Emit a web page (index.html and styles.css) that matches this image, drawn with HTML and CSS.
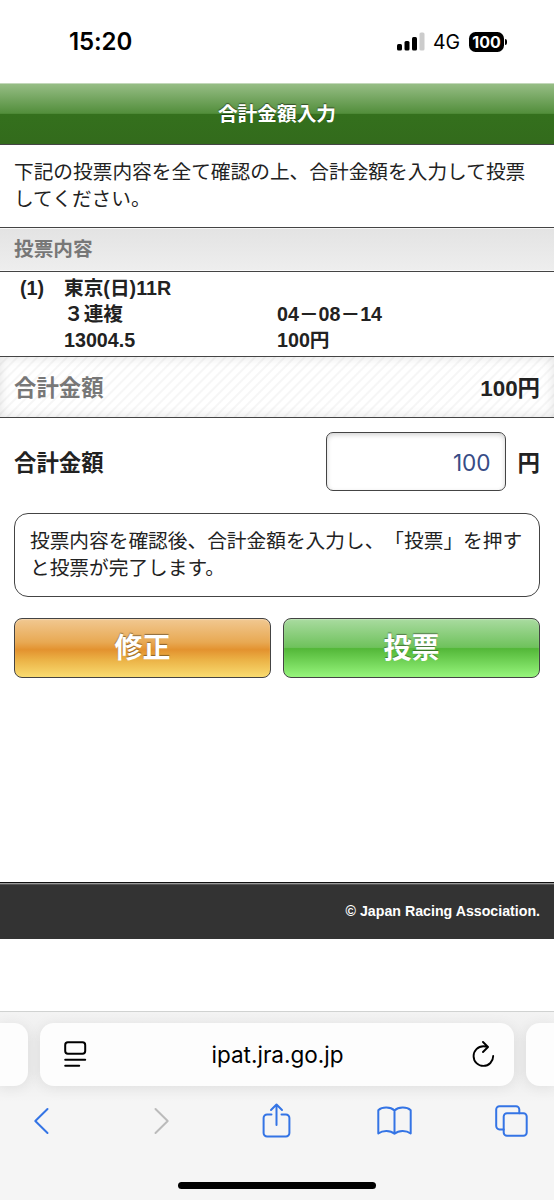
FILE: index.html
```
<!DOCTYPE html>
<html lang="ja">
<head>
  <meta charset="UTF-8">
  <meta name="viewport" content="width=device-width, initial-scale=1.0">
  <title>合計金額入力</title>
  <link rel="stylesheet" href="styles.css">
</head>
<body>
  <div class="status">
    <div class="time">15:20</div>
    <svg class="signal" width="28" height="19" viewBox="0 0 28 19">
      <rect x="0" y="12" width="5" height="6.5" rx="1.5"/>
      <rect x="7.5" y="9" width="5" height="9.5" rx="1.5"/>
      <rect x="15" y="5" width="5" height="13.5" rx="1.5"/>
      <rect x="22.5" y="0.5" width="5" height="18" rx="1.5" fill="#ccc"/>
    </svg>
    <div class="network">4G</div>
    <div class="battery">100</div>
    <div class="battery-tip"></div>
  </div>

  <header>合計金額入力</header>

  <main>
    <p class="intro">下記の投票内容を全て確認の上、合計金額を入力して投票<br>してください。</p>

    <h2>投票内容</h2>
    <div class="bet">
      <span class="number">(1)</span><span>東京(日)11R</span><span></span>
      <span></span><span>３連複</span><span>04－08－14</span>
      <span></span><span>13004.5</span><span>100円</span>
    </div>

    <div class="total">
      <span class="total-label">合計金額</span>
      <span>100円</span>
    </div>

    <form onsubmit="return false">
      <div class="amount">
        <label for="amount">合計金額</label>
        <input id="amount" type="text" inputmode="numeric" value="100">
        <span class="yen">円</span>
      </div>
      <p class="message">投票内容を確認後、合計金額を入力し、「投票」を押す<br>と投票が完了します。</p>
      <div class="buttons">
        <button class="orange" type="button">修正</button>
        <button class="green" type="submit">投票</button>
      </div>
    </form>
  </main>

  <footer>© Japan Racing Association.</footer>

  <div class="browser">
    <div class="tabs">
      <div class="side-tab"></div>
      <div class="address">
        <svg width="23" height="27" viewBox="0 0 23 27" fill="none" stroke="#000" stroke-width="2" stroke-linecap="round">
          <rect x="1.2" y="1.2" width="20" height="11.6" rx="2.7"/>
          <path d="M1.2 18.7h20M1.2 24.8h14"/>
        </svg>
        <span class="url">ipat.jra.go.jp</span>
        <svg width="23" height="27" viewBox="0 0 23 27" fill="none" stroke="#000" stroke-width="1.9" stroke-linecap="round" stroke-linejoin="round">
          <path d="M21.2 15A9.8 9.8 0 1 1 11.4 5.3c1.5 0 2.9.2 4.1.6M11 1l5 5-5 5"/>
        </svg>
      </div>
      <div class="side-tab"></div>
    </div>
    <div class="toolbar">
      <svg viewBox="0 0 16 28" height="28"><path d="M14 2L1.8 14 14 26"/></svg>
      <svg class="disabled" viewBox="-2 0 16 28" height="28"><path d="M2 2l12.2 12L2 26"/></svg>
      <svg viewBox="0 0 28 36" height="36"><path d="M9 11.5H4.6a3.5 3.5 0 0 0-3.5 3.5v15a3.5 3.5 0 0 0 3.5 3.5h18.8a3.5 3.5 0 0 0 3.5-3.5V15a3.5 3.5 0 0 0-3.5-3.5H19M14 22V1.5M8.5 7L14 1.5 19.5 7"/></svg>
      <svg viewBox="0 0 35 30" height="30"><path d="M17.5 4.5v23.3M17.5 4.5C13.5.8 5.5.5 1.3 4.2v23.3c4.5-3.3 12-3.3 16.2.3 4.2-3.6 11.7-3.6 16.2-.3V4.2C29.5.5 21.5.8 17.5 4.5z"/></svg>
      <svg viewBox="0 0 33 32" height="32"><path d="M8.7 24.4H4.5A3.3 3.3 0 0 1 1.2 21V4.5a3.3 3.3 0 0 1 3.3-3.3H21a3.3 3.3 0 0 1 3.3 3.3v3.8"/><rect x="8.7" y="8.3" width="23" height="22.5" rx="3.3"/></svg>
    </div>
    <div class="home-bar"></div>
  </div>
</body>
</html>
```
FILE: styles.css
```
* {
  box-sizing: border-box;
}
html, body {
  margin: 0;
  padding: 0;
}
body {
  display: flex;
  flex-direction: column;
  height: 1200px;
  font-family: "Liberation Sans", "Noto Sans CJK JP", sans-serif;
  font-size: 19.69px;
  line-height: 27px;
  color: #222;
  background: #fff;
  text-spacing-trim: space-all;
  overflow: hidden;
}
.status {
  display: flex;
  align-items: center;
  flex: none;
  height: 83px;
  padding-left: 69px;
  font-family: Inter, sans-serif;
  line-height: 28px;
  color: #000;
}
.time {
  width: 328px;
  padding-top: 1px;
  font-size: 24px;
  font-weight: 600;
  letter-spacing: -0.1px;
}
.network {
  width: 36px;
  margin-left: 8px;
  padding-top: 1px;
  font-size: 19.5px;
}
.battery {
  width: 35px;
  height: 20px;
  border-radius: 6.5px;
  background: #000;
  color: #fff;
  font-size: 16px;
  font-weight: 700;
  line-height: 20px;
  text-align: center;
}
.battery-tip {
  width: 2px;
  height: 6px;
  margin-left: 1px;
  border-radius: 0 2px 2px 0;
  background: #000;
}
header {
  flex: none;
  height: 62px;
  border-top: 1px solid #c3d8ba;
  border-bottom: 1px solid #444;
  background: linear-gradient(#96bd85, #528e3b 49%, #34701d 50%, #336b1c);
  color: #fff;
  font-weight: bold;
  line-height: 60px;
  text-align: center;
  text-shadow: 0 -1px 1px rgba(0, 0, 0, 0.5);
}
main {
  flex: none;
  height: 737px;
}
.intro {
  height: 82px;
  margin: 0;
  padding: 14px 14px 0;
  white-space: nowrap;
}
h2 {
  height: 45px;
  margin: 0;
  padding-left: 14px;
  border-top: 1px solid #444;
  border-bottom: 1px solid #444;
  background: linear-gradient(#e3e3e3, #eee);
  box-shadow: inset 0 1px 0 #f6f6f6, inset 0 -1px 0 #fafafa;
  color: #777;
  font-size: 19.69px;
  line-height: 43px;
}
.bet {
  display: grid;
  grid-template-columns: 44px 213px 1fr;
  grid-auto-rows: 26px;
  height: 84px;
  padding: 3px 20px 0;
  font-weight: bold;
  line-height: 26px;
}
.total {
  display: flex;
  justify-content: space-between;
  height: 62px;
  padding: 0 14px;
  border-top: 1px solid #444;
  border-bottom: 1px solid #444;
  background: repeating-linear-gradient(135deg, #fff 0 4px, #f6f6f6 5px 6px, #fff 7px);
  box-shadow: inset 0 0 12px rgba(0, 0, 0, 0.12);
  font-size: 22.4px;
  font-weight: bold;
  line-height: 63px;
}
.total-label {
  color: #777;
}
form {
  padding: 14px 14px 0;
}
.amount {
  display: flex;
  align-items: center;
  font-size: 22.4px;
  font-weight: bold;
}
.amount label {
  flex: 1;
  padding-top: 3px;
}
.amount input {
  width: 180px;
  height: 59px;
  padding: 1px 14px 0;
  border: 1px solid #444;
  border-radius: 7px;
  box-shadow: inset 0 2px 5px rgba(0, 0, 0, 0.18);
  color: #374c86;
  font-family: Inter, sans-serif;
  font-size: 22.6px;
  text-align: right;
}
.yen {
  margin-left: 12px;
  padding-top: 3px;
}
.message {
  height: 84px;
  margin: 22px 0 21px;
  padding: 14px 15px;
  border: 1px solid #444;
  border-radius: 14px;
  white-space: nowrap;
}
.buttons {
  display: flex;
  gap: 12px;
}
.buttons button {
  flex: 1;
  height: 60px;
  padding: 0 0 5px;
  border: 1px solid #444;
  border-radius: 8px;
  color: #fff;
  font-family: inherit;
  font-size: 28px;
  font-weight: bold;
  text-shadow: 0 -1px 1px rgba(0, 0, 0, 0.4);
}
.buttons .orange {
  background: linear-gradient(#f1c891, #e8a953 40%, #e3922f 53%, #ebb145 70%, #f9dc71);
  box-shadow: inset 0 1px 1px #f4d5ad;
}
.buttons .green {
  background: linear-gradient(#a9dba0, #6fc25c 49%, #53b738 51%, #96f57c);
  box-shadow: inset 0 1px 1px #bce3b4;
}
footer {
  flex: none;
  height: 57px;
  padding-right: 14px;
  border-top: 1px solid #111;
  background: linear-gradient(#999 0 1px, #555 1px 2px, #333 2px);
  color: #fff;
  font-size: 14.2px;
  font-weight: bold;
  line-height: 56px;
  text-align: right;
}
.browser {
  flex: none;
  height: 189px;
  margin-top: 72px;
  border-top: 1px solid #d0d2d1;
  background: linear-gradient(#f3f3f3, #ededed 30px, #ededed 60px, #f5f5f5 90px);
}
.tabs {
  display: flex;
  gap: 12px;
  height: 75px;
  padding-top: 11px;
}
.side-tab,
.address {
  height: 63px;
  border-radius: 14px;
  background: #fdfdfd;
  box-shadow: 0 2px 14px rgba(0, 0, 0, 0.07);
}
.side-tab {
  width: 28px;
}
.side-tab:first-child {
  border-radius: 0 14px 14px 0;
}
.side-tab:last-child {
  border-radius: 14px 0 0 14px;
}
.address {
  display: flex;
  align-items: center;
  justify-content: space-between;
  width: 474px;
  padding: 0 19px 0 24px;
  color: #000;
  font-family: Inter, sans-serif;
  font-size: 22.5px;
}
.url {
  margin-right: 4px;
  padding-bottom: 1px;
}
.toolbar {
  display: flex;
  align-items: center;
  justify-content: space-between;
  height: 68px;
  padding: 0 25px 0 24px;
}
.toolbar svg {
  width: 35px;
  fill: none;
  stroke: #3474e5;
  stroke-width: 2;
  stroke-linecap: round;
  stroke-linejoin: round;
}
.toolbar .disabled {
  stroke: #bbb;
}
.home-bar {
  width: 198px;
  height: 7px;
  margin: 27px auto 0;
  border-radius: 4px;
  background: #000;
}
```
